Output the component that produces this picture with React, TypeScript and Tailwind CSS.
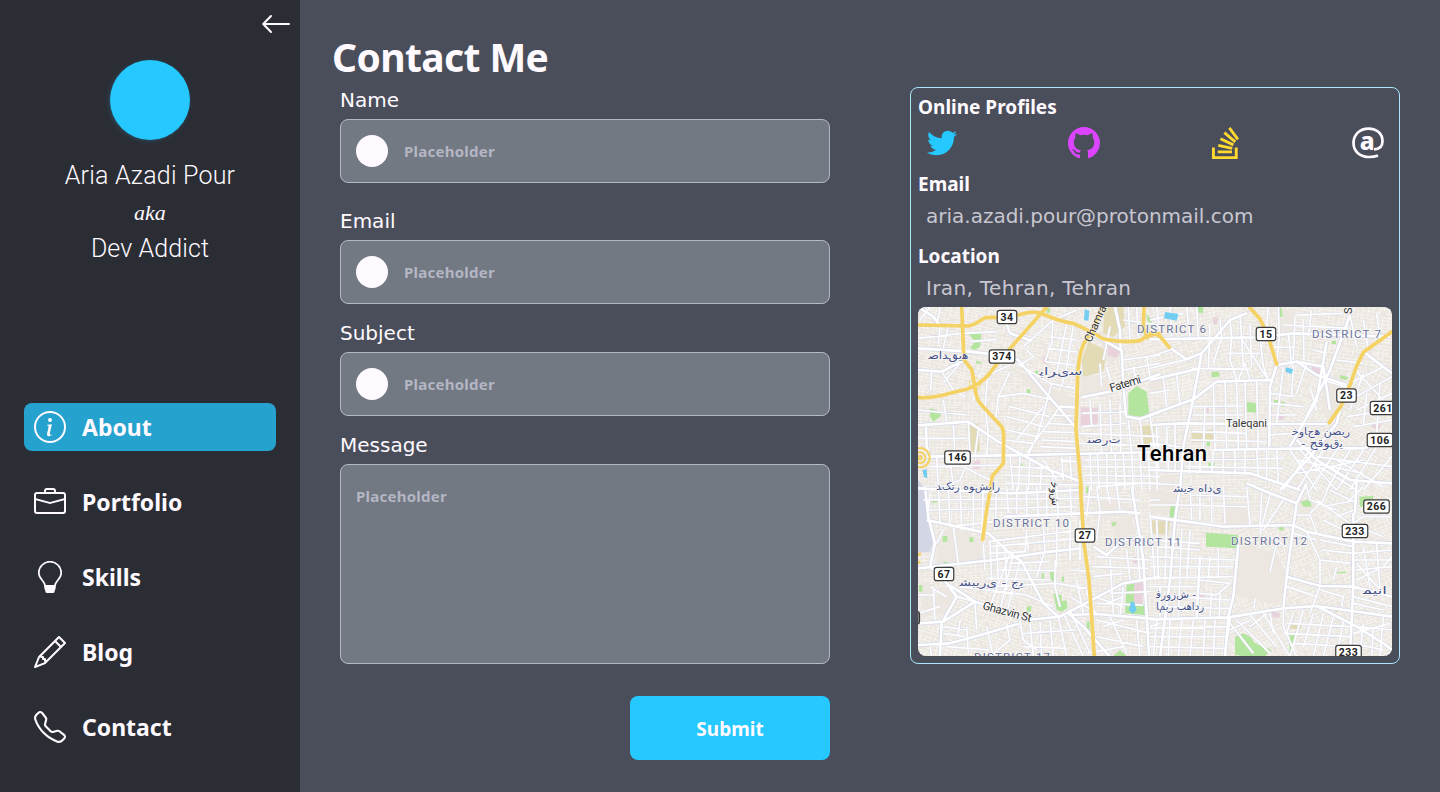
import React from "react";
import { BsInfoCircle, BsBriefcase, BsPencil, BsTelephone, BsGithub, BsStackOverflow } from "react-icons/bs";
import { FaTwitter } from "react-icons/fa";

function ArrowLeft() {
  return (
    <svg className="h-8 w-8" viewBox="0 0 32 32" fill="none" stroke="currentColor" strokeWidth="2" strokeLinecap="round" strokeLinejoin="round">
      <path d="M29 16H3.500M11 8L3.200 16l7.800 8" />
    </svg>
  );
}

function Bulb() {
  return (
    <svg className="h-8 w-8" viewBox="0 0 32 32" fill="none">
      <path d="M11 24.200C10 19.500 4.800 17.500 4.800 11.900a11.200 11.200 0 0 1 22.400 0c0 5.600-5.200 7.600-6.200 12.300" stroke="currentColor" strokeWidth="1.700" />
      <path d="M10 24h12l-.4 3.600q-.1 1-.7 1.400l-.4 2q-.4 1-1.400 1h-6.200q-1 0-1.400-1l-.4-2q-.6-.4-.7-1.400z" fill="currentColor" />
    </svg>
  );
}

function AtSign() {
  return (
    <svg className="h-8 w-8" viewBox="0 0 32 32">
      <path d="M26 28.400C23.400 29.500 20.600 30 17.300 30 8 30 1.500 24.500 1.500 16 1.500 7.500 8 1.600 16.500 1.600c8.200 0 14 5.100 14 12.700 0 5.600-3 8.100-8.500 8.100" fill="none" stroke="currentColor" strokeWidth="2.700" />
      <text x="7.800" y="23.400" fontSize="24.500" fontWeight="800" fontFamily="'Noto Sans', sans-serif" fill="currentColor">a</text>
    </svg>
  );
}

const nav = [
  { label: "About", icon: <BsInfoCircle size={32} />, active: true },
  { label: "Portfolio", icon: <BsBriefcase size={32} /> },
  { label: "Skills", icon: <Bulb /> },
  { label: "Blog", icon: <BsPencil size={32} /> },
  { label: "Contact", icon: <BsTelephone size={32} /> },
];

function Sidebar() {
  return (
    <aside className="flex w-[300px] shrink-0 flex-col bg-[#2b2d35]">
      <div className="flex h-[60px] justify-end pt-2 pr-2">
        <div className="h-8"><ArrowLeft /></div>
      </div>
      <div className="flex h-[343px] flex-col items-center font-['Roboto',sans-serif] font-light">
        <div className="h-20 w-20 rounded-full bg-[#25c8ff] shadow-[-1px_1px_4px_rgba(37,200,255,0.2)]" />
        <div className="mt-[17px] h-[37px] text-[25px] leading-[37px] tracking-[0.2px]">Aria Azadi Pour</div>
        <div className="h-[36px] font-['Liberation_Serif',serif] text-[22px] leading-[38px] font-normal italic">aka</div>
        <div className="h-[37px] text-[25px] leading-[37px] tracking-[0.1px]">Dev Addict</div>
      </div>
      <nav className="flex flex-col gap-[27px] px-6">
        {nav.map((n) => (
          <a key={n.label} className={n.active ? "flex h-12 items-center gap-4 rounded-lg bg-[#25a2ce] pl-[10px]" : "flex h-12 items-center gap-4 rounded-lg pl-[10px]"}>
            {n.icon}
            <span className="text-[23px] leading-8 font-bold">{n.label}</span>
          </a>
        ))}
      </nav>
    </aside>
  );
}

function Field({ label, gap }: { label: string; gap: string }) {
  return (
    <label className={"flex flex-col " + gap}>
      <span className="h-10 font-['DejaVu_Sans',sans-serif] text-[20px] leading-[42px]">{label}</span>
      <span className="flex h-16 items-center gap-4 rounded-lg border border-[#b5b7c3] bg-[#727983] px-[15px]">
        <span className="h-8 w-8 rounded-full bg-[#fffaff]" />
        <span className="text-[15px] leading-6 font-bold tracking-[0.25px] text-[#b5b5c3]">Placeholder</span>
      </span>
    </label>
  );
}

/* ---------- map ---------- */

type Tile = { x: number; y: number; major: string; minor: string; yellow: string };

const tiles: Tile[] = [
  {
    x: 0, y: 0,
    major:
      "M24 145L180 155 290 168 325 180 400 270 497 382M50 470L350 465 750 456M530 92L635 152 640 250 648 350M24 376L175 365 265 425 420 510 514 545M515 292L600 275 750 222M648 350L690 357 750 335M450 320L500 322M24 210L95 215 158 183M285 60L300 100 365 122M24 21L70 50 90 76M615 21L630 90 632 150M48 380L50 440 60 470",
    minor:
      "M60 21L30 60M90 21L80 76M90 76L85 130M115 76L100 145M24 115L155 100 262 95M180 125L262 118M340 140L430 60 500 30M350 150L370 170 330 195M430 45L425 130 405 185M470 70L440 220M490 80L470 200 455 260M405 185L495 195M420 110L500 120M410 145L500 155M210 220L190 300M232 240L225 320 235 400M265 290L255 370M235 225L300 195M300 215L265 290 340 280 430 300M320 190L370 220 420 250 495 265M425 250L385 400 355 465M400 320L320 420M300 320L420 350M290 350L400 380M290 390L380 410M285 420L370 430M430 345L490 348M415 370L495 375M400 395L500 398M395 420L505 425M390 440L505 445M450 320L350 460M24 330L170 345M100 300L110 365M65 210L62 270M95 215L130 270 165 290M100 250L150 190M235 400L230 470M130 375L135 465M175 365L180 470M205 390L195 465M24 415L170 415M60 500L280 495M80 470L85 570M120 470L130 570M180 470L150 540 100 560M160 500L240 540M300 470L310 570M330 470L325 570M360 480L355 570M395 495L390 570M430 515L425 570M300 500L420 505M285 525L460 530M285 550L510 555M450 480L500 485M455 470L460 540M480 470L485 540M400 480L440 540M505 400L750 410M505 430L750 438M515 380L650 370M540 300L545 380M570 310L575 460M600 300L605 460M630 310L632 460M655 360L665 460M690 357L700 456M720 345L735 456M515 340L650 335M520 480L750 478M520 500L750 502M520 525L750 530M520 548L750 550M540 460L545 570M562 460L568 570M590 460L592 570M615 460L620 570M640 460L645 570M665 460L670 570M690 460L696 570M715 460L720 570M738 460L742 570M600 80L580 180M590 200L610 270 640 250M570 190L575 260M640 180L750 165M640 210L750 190M670 200L680 250M710 170L720 230M640 60L750 75M655 21L660 120M680 21L685 110",
    yellow:
      "M24 75L175 78Q190 76 225 53L262 52M322 46Q375 28 405 45 455 66 490 70 545 95 580 117 640 130 690 122 715 103 750 101M155 21L162 180 185 208 195 262Q198 300 215 315L275 380Q282 390 281 420L280 490 247 528 240 570M24 292Q60 297 120 280L170 268Q215 250 235 225L270 180 410 21M578 21L550 85 522 130Q506 160 503 230L498 390 514 570M702 21L700 85 712 112",
  },
  {
    x: 720, y: 0,
    major:
      "M0 118L320 112 430 100 720 110M58 142L110 178 155 160 240 60 290 40M155 160L130 295 100 440 90 570M0 345L130 298 200 245 362 240M380 195L360 260 358 440M190 450L470 445 640 445 726 420M0 375L100 370 350 372 530 372M380 195L440 185 500 225 590 255M530 125L500 300 420 440M440 185L520 200 540 330M600 45L540 210 470 350M640 155L726 220M570 330L560 370 480 470 390 570M440 420L500 480 600 540 726 550M0 240L150 205M0 510L300 520 450 570",
    minor:
      "M110 21L120 110M140 21L145 112M180 75L175 205M210 60L215 112 190 190M240 60L245 112M245 112L240 180 260 240M270 40L280 200M300 70L305 200M330 112L340 200 355 240M355 21L350 80M385 21L388 110 380 190M415 100L425 195M435 50L430 180 M460 60L462 180M485 30L475 110M435 45L580 40M400 75L600 85M360 140L430 142M230 160L330 160M180 205L300 208 M125 205L240 208M0 170L60 150M0 205L110 178M0 280L60 270M40 235L50 320M80 225L90 310M130 320L280 318M130 345L280 345M125 395L290 400M120 420L350 425M165 320L160 450M190 250L195 450M225 240L230 450M260 240L265 450M285 240L290 450M320 240L325 450M285 190L265 240M285 190L300 240M355 240L270 110M360 280L430 290M360 310L460 320M358 345L440 345M358 405L430 400M400 200L380 370M430 195L425 290M470 190L440 280 M480 260L500 330M520 240L600 265M600 45L620 140M640 60L655 150M680 40L690 115M560 180L640 190M600 250L700 200M620 215L700 300M600 300L726 230M620 330L726 280M590 350L726 330M610 380L726 360M650 280L640 380M690 250L680 400M0 430L90 440M0 480L100 485M0 550L90 555M20 380L25 500M50 380L55 510M75 370L75 510M120 450L118 520M150 450L150 520M190 450L185 520M220 450L220 520M255 450L255 520M285 450L285 520M320 450L325 530M350 450L350 540M380 450L385 550M110 480L400 475M110 500L400 505M420 450L500 570M450 450L560 570M480 450L400 570M520 450L440 570M560 450L480 570M600 450L530 570M640 450L560 570M680 440L600 570M726 470L640 570M440 480L640 520M500 470L726 500M440 520L640 480M490 490L620 570M560 480L700 560M0 60L100 40M20 21L30 100M60 21L65 110M490 150L530 160M640 220L600 330",
    yellow:
      "M0 101Q22 100 33 113L58 142M298 21L330 57 353 105 370 160 380 193M726 95L640 157 620 198 600 255 572 320 538 368",
  },
  {
    x: 0, y: 540,
    major:
      "M45 20L55 110 75 190 60 260 110 310 140 350 95 430 90 530M50 120L235 160 300 220 335 245 400 370 445 410M24 265L250 240 420 215 510 205M110 310L195 365 350 420 450 410 640 310 750 290M24 430L100 425 195 365M24 495L120 490 230 460 330 430M475 405L560 402 750 418M475 400L520 440 600 530M280 110L640 95 690 100M550 200L590 225 640 180 700 170M665 20L700 240 718 540M24 25L300 40 510 30",
    minor:
      "M60 40L55 90M85 20L90 130M115 20L120 140M150 20L155 150M190 20L190 150M220 20L215 160M260 20L255 150M290 20L295 100M320 20L320 100M350 20L350 110M380 20L385 110M410 20L410 110M440 20L445 110M480 20L485 110M40 60L510 55M55 90L500 80M120 140L250 125M130 140L145 250M100 150L80 190M220 190L225 270M240 185L245 300M260 190L265 300M285 200L290 330M310 220L270 390M330 240L290 400M300 220L240 380M350 180L355 210M235 185L510 150M240 200L510 175M235 220L350 215M350 150L345 215M400 140L405 210 380 290M440 120L440 260M480 120L480 240M510 120L510 240M300 250L420 245M260 270L440 272M230 295L420 300M250 320L440 310 530 325M435 240L435 320 450 380M480 270L550 275M150 320L350 345 430 380M140 350L250 380M60 320L110 350M70 320L75 420M24 345L70 345M24 400L90 380M150 420L145 470M195 370L200 450M170 440L175 520M100 440L170 450M100 460L165 470M230 440L250 530M290 430L300 480 240 530M330 420L340 480 380 510M360 430L370 530M390 425L395 530M420 420L430 530M445 410L470 530M460 400L520 530M480 390L540 520M340 460L500 450M340 500L470 505M110 500L240 510M60 500L65 530M555 350L640 380M560 370L700 375M545 400L530 330M500 300L520 400M480 350L560 400M560 420L720 460M580 440L640 420M560 470L700 500M600 410L650 520M640 320L630 410M530 110L540 20M560 20L570 90M590 20L600 70M620 20L630 90M520 50L690 60M570 90L560 180M560 230L720 240M545 260L715 265M550 290L640 280M600 230L610 400M650 210L660 300M680 170L690 300M720 100L735 300M600 340L720 335M590 370L640 350M720 60L750 60M560 20L690 10M530 520L640 500M680 420L690 530M720 440L750 430",
    yellow: "M243 18L230 90 218 178M511 20L522 190 537 300 553 530",
  },
  {
    x: 720, y: 540,
    major:
      "M0 110L220 140 430 135 470 155 610 185 726 190M290 10L360 40 440 70 430 140 410 290 400 385M265 195L250 350 235 410 225 530M0 418L235 412 400 385 500 378 726 410M410 290L510 318 610 320 726 350M610 100L610 320 600 520M240 410L230 480M90 20L75 120 60 300 30 530M440 70L470 10M500 378L620 440 700 490 726 510M620 0L615 100M150 230L140 410",
    minor:
      "M120 20L125 120M150 20L150 120M185 20L185 130M220 20L225 130M290 20L300 135M0 75L80 75M85 75L290 80M120 45L290 50M335 40L330 140M360 45L330 160M400 60L340 150M440 105L480 105 500 160M480 100L520 60 540 10M500 60L600 130 700 170M520 80L620 60M540 30L600 60 640 20M560 110L610 90M580 150L640 110 720 110M470 20L480 60 560 90M520 120L600 160M470 155L510 240 510 320M510 180L610 200M515 210L610 220M510 240L600 250M430 160L500 180M410 320L500 350M510 320L480 400M510 330L580 350 575 380M560 260L550 300M610 220L726 210M615 240L726 240M620 270L726 260M620 300L700 260 726 230M620 250L700 340M640 200L660 320M680 190L690 330M610 350L726 380M610 370L700 390M380 190L360 275M410 200L360 170M0 180L150 190M20 200L150 210M0 230L260 240M0 260L250 260M0 295L250 290M0 320L150 320M20 120L25 300M50 120L45 300M95 150L85 410M120 150L110 300M180 230L175 300M205 205L205 290M150 300L240 310M150 340L200 345 240 310M60 350L240 360M30 380L240 385M30 320L30 410M185 340L180 410M210 340L208 410M0 445L230 440M0 470L225 470M0 500L225 505M20 420L10 530M60 420L55 530M95 420L85 530M130 420L120 530M165 420L160 530M195 420L190 530M240 430L310 520M260 420L360 520M300 405L380 500M340 400L420 530M240 450L300 420M300 440L350 400M360 400L370 460M400 390L400 440 440 530M430 400L410 460M460 390L420 530M490 400L460 500M520 400L490 530M550 410L520 530M580 425L560 530M410 430L600 440M400 460L600 470M430 490L600 500M620 440L726 450M610 460L720 430M610 490L700 510M640 430L630 520M670 440L665 530M700 410L690 530M315 355L312 385",
    yellow: "",
  },
];

function rng(seed: number) {
  let s = seed;
  return () => {
    s = (s * 16807) % 2147483647;
    return s / 2147483647;
  };
}

/* Short lanes in two crossing directions, filling a w × h rectangle. */
function lanes(seed: number, w: number, h: number, step: number) {
  const r = rng(seed);
  let d = "";
  for (let y = -h; y < h; y += step * (0.7 + r() * 0.6)) {
    let x = -w + r() * 30;
    while (x < w) {
      const len = 20 + r() * 60;
      d += `M${x.toFixed(0)} ${y.toFixed(0)}h${len.toFixed(0)}`;
      x += len + 3 + r() * 16;
    }
  }
  for (let x = -w; x < w; x += step * 1.5 * (0.7 + r() * 0.6)) {
    let y = -h + r() * 20;
    while (y < h) {
      const len = 10 + r() * 34;
      d += `M${x.toFixed(0)} ${y.toFixed(0)}v${len.toFixed(0)}`;
      y += len + 4 + r() * 20;
    }
  }
  return d;
}

const areas = [
  { p: "0,0 500,0 500,300 300,200 0,330", a: 12 },
  { p: "0,330 300,200 500,400 500,700 0,640", a: 2 },
  { p: "500,300 840,240 1080,250 1080,640 500,640", a: -2 },
  { p: "500,0 900,0 1080,250 500,300", a: -16 },
  { p: "900,0 1500,0 1500,200 1080,250", a: 8 },
  { p: "1080,250 1500,200 1500,660 1080,640", a: 28 },
  { p: "0,640 540,640 540,870 0,870", a: -4 },
  { p: "0,870 540,870 540,1110 0,1110", a: 18 },
  { p: "540,640 960,640 960,1110 540,1110", a: 3 },
  { p: "960,640 1500,640 1500,1110 960,1110", a: -22 },
];
const areaLanes = areas.map((_, i) => lanes(37 + i * 91, 560, 460, 10));

const open = [
  "24,20 50,20 24,60", "510,220 590,235 590,290 515,290", "560,100 600,80 635,160 600,200", "720,230 760,215 765,270 722,285",
  "515,200 530,250 515,300", "1110,30 1150,30 1150,90 1108,95", "1240,240 1310,210 1300,300 1260,370 1235,330",
  "80,700 130,680 215,720 215,790 85,800", "560,600 640,610 690,635 560,660", "30,845 60,850 90,920 40,960",
  "945,610 1010,610 1015,675 945,675", "1000,730 1100,760 1130,830 1110,915 985,890 970,840", "1160,600 1220,600 1215,640 1170,650",
  "600,660 660,650 680,700 620,720", "720,560 800,580 790,640 720,640", "720,520 800,530 790,570 720,560", "90,860 130,880 120,940 70,950",
];
const sand = [
  "582,21 640,21 645,80 610,110 580,100", "535,125 590,150 580,215 520,230 515,180", "170,375 205,370 210,455 185,455", "685,378 735,375 725,445 700,440",
  "845,400 918,385 915,420 845,428", "720,660 780,663 775,705 720,700", "1140,970 1175,975 1170,990 1140,985", "1275,923 1285,923 1285,937 1275,937",
];
const pink = [
  "512,322 565,325 562,383 512,380", "595,135 630,155 620,175 592,165", "400,168 420,180 410,192 398,190", "1205,200 1250,210 1245,232 1205,225",
  "672,850 700,848 698,912 672,912", "190,485 210,480 212,505 192,508", "865,885 885,885 885,900 865,900", "1085,935 1110,938 1108,955 1085,950",
  "1385,365 1415,375 1405,390 1385,382", "670,770 690,770 690,790 670,790", "1105,340 1125,340 1120,360 1105,360", "910,50 925,55 920,75 910,70", "880,325 897,325 897,338 880,338",
];
const green = [
  "175,100 215,92 210,140 195,150 180,145 195,125", "655,280 680,258 710,275 718,340 690,350 655,345", "60,325 95,335 90,350 70,365 60,350", "860,21 880,21 880,38 860,38",
  "1007,305 1040,310 1040,338 1008,335", "905,215 928,215 928,230 905,232", "1105,21 1115,25 1118,50 1108,50", "888,698 985,705 980,745 888,740",
  "650,855 672,850 672,910 708,912 705,945 645,940", "430,880 455,885 455,935 440,930", "452,905 470,900 472,925 455,935", "782,618 800,615 797,655 778,650", "395,820 402,820 402,840 395,840", "420,815 432,815 432,845 422,840",
  "65,598 82,598 82,608 65,608", "98,708 112,708 112,725 98,725", "178,712 190,712 190,726 178,726", "975,1010 1000,1000 1020,1010 1035,1030 1085,1050 1060,1075 975,1065", "1140,1005 1158,1000 1150,1050 1138,1055",
  "1172,605 1200,598 1205,620 1180,620", "1348,590 1390,588 1390,620 1350,620", "610,1068 630,1050 650,1068", "1092,300 1105,300 1102,315 1092,315", "1113,305 1125,305 1122,320 1113,320", "890,422 900,422 900,438 890,438", "895,488 915,488 912,505 895,505",
  "100,785 112,785 112,800 100,800", "1282,815 1310,815 1308,820 1282,820", "1290,225 1315,232 1310,240 1290,236", "330,490 338,490 338,500 330,500", "405,755 438,755 438,760 405,760", "528,560 538,560 538,580 528,580", "350,920 365,918 362,935 350,935", "604,668 620,665 615,678 606,678", "455,830 462,830 462,845 455,845", "27,855 37,855 37,875 27,875", "198,182 212,185 212,192 198,190", "375,212 385,212 383,225 375,222", "350,268 362,268 360,280 350,278", "1265,122 1278,122 1278,132 1265,132", "708,40 725,60 730,85 715,75", "1107,680 1122,682 1120,692 1107,690", "410,25 420,25 420,38 410,38", "530,965 540,965 538,990 530,985",
];
const water = ["524,28 538,32 535,62 522,60", "765,36 805,42 800,62 762,55", "1127,202 1150,208 1145,222 1127,215", "662,905 672,905 680,930 668,942 656,930 660,920", "37,510 50,508 52,535 42,530"];

const shields: [number, number, string][] = [
  [1007, 317, "34"], [1002, 356.5, "374"], [957.5, 457.5, "146"], [1266, 334, "15"], [1346.5, 395.5, "23"], [1383, 408, "261"],
  [1380, 440, "106"], [1376.5, 506.5, "266"], [1355, 531, "233"], [1085, 535.5, "27"], [944, 574, "67"], [1348.5, 652, "233"],
];

const rtl: [number, number, string, number][] = [
  [948.5, 359, "صادقیه", 40], [1061, 375, "پاریس", 43], [1104, 443, "نصرت", 33], [968, 490, "دکتر هوشیار", 64], [991.5, 586, "شبیری - جی", 64],
  [1197.5, 492, "شیخ هادی", 48], [1321, 435, "خواجه نصیر", 58], [1322, 447, "- حقوقی", 42], [1176, 598, "فروزش -", 40], [1180, 610, "امیر بهادر", 48], [1375, 594, "مینا", 24],
];

/* Keeps each letter's contextual form while the letters run left to right. */
function spread(s: string) {
  const ZWJ = "\u200d";
  const ZWNJ = "\u200c";
  const letter = (c?: string) => !!c && c > "\u0600";
  const dual = (c?: string) => letter(c) && !"اآدذرزژو".includes(c as string);
  return s
    .split("")
    .map((c, i) => {
      if (!letter(c)) return c;
      const next = dual(c) && letter(s[i + 1]);
      const prev = dual(s[i - 1]);
      return (next ? ZWJ : "") + c + (prev ? ZWJ : "") + ZWNJ;
    })
    .join("");
}

const districts: [number, number, string, number][] = [
  [1137, 333, "DISTRICT 6", 69], [1312, 337.5, "DISTRICT 7", 69], [993, 526.5, "DISTRICT 10", 76], [1105, 546, "DISTRICT 11", 76], [1231, 544.5, "DISTRICT 12", 76], [974, 661, "DISTRICT 17", 76],
];

const halo = { paintOrder: "stroke" } as const;

function CityMap() {
  return (
    <svg className="h-[349px] w-[474px] rounded-lg" viewBox="918 307 474 349">
      <rect x="918" y="307" width="474" height="349" fill="#ece7e1" />
      <g transform="translate(910 300) scale(.33333)" fill="none">
        {areas.map((a, i) => (
          <clipPath key={i} id={"area" + i}><polygon points={a.p} /></clipPath>
        ))}
        {areas.map((a, i) => {
          const pts = a.p.split(" ").map((q) => q.split(",").map(Number));
          const cx = pts.reduce((s, q) => s + q[0], 0) / pts.length;
          const cy = pts.reduce((s, q) => s + q[1], 0) / pts.length;
          return (
            <g key={i} clipPath={`url(#area${i})`}>
              <path transform={`translate(${cx} ${cy}) rotate(${a.a})`} d={areaLanes[i]} stroke="#f8f6f2" strokeWidth="2.500" />
            </g>
          );
        })}
        {open.map((p) => <polygon key={p} points={p} fill="#ece7e1" />)}
        {sand.map((p) => <polygon key={p} points={p} fill="#e3dbb5" />)}
        {pink.map((p) => <polygon key={p} points={p} fill="#ead2dc" />)}
        {green.map((p) => <polygon key={p} points={p} fill="#b4e59f" />)}
        <polygon points="24,540 40,560 52,640 68,730 60,755 24,758" fill="#d3d6e4" />
        {tiles.map((t, i) => <path key={i} transform={`translate(${t.x} ${t.y})`} d={t.minor} stroke="#d9dcec" strokeWidth="8" />)}
        {tiles.map((t, i) => <path key={i} transform={`translate(${t.x} ${t.y})`} d={t.major} stroke="#d3d7ea" strokeWidth="12" strokeLinejoin="round" />)}
        {tiles.map((t, i) => <path key={i} transform={`translate(${t.x} ${t.y})`} d={t.minor} stroke="#fff" strokeWidth="5" />)}
        {tiles.map((t, i) => <path key={i} transform={`translate(${t.x} ${t.y})`} d={t.major} stroke="#fff" strokeWidth="8" strokeLinejoin="round" />)}
        {water.map((p) => <polygon key={p} points={p} fill="#72cdf1" />)}
        {tiles.map((t, i) => <path key={i} transform={`translate(${t.x} ${t.y})`} d={t.yellow} stroke="#f4d264" strokeWidth="11" strokeLinecap="round" strokeLinejoin="round" />)}
        <g stroke="#f4d264" strokeWidth="6">
          <circle cx="30" cy="473" r="29" />
          <circle cx="30" cy="473" r="16" />
          <circle cx="30" cy="473" r="5" />
          <path d="M24 763h9M24 787h7" strokeWidth="9" />
          <circle cx="195" cy="250" r="17" strokeWidth="2.500" />
        </g>
      </g>

      <g fontFamily="'Roboto', sans-serif" fill="#68729c" stroke="#fff" strokeWidth="1.500" strokeOpacity=".6" fontSize="11.500">
        {districts.map(([x, y, s, w]) => <text key={s} x={x} y={y} textLength={w} style={halo}>{s}</text>)}
      </g>
      <g fontFamily="'DejaVu Sans', sans-serif" fill="#45528a" stroke="#fff" strokeWidth="1.500" strokeOpacity=".7" fontSize="10.500" textAnchor="middle">
        {rtl.map(([x, y, s, w]) => (
          <text key={s} x={x} y={y} textLength={w} lengthAdjust="spacingAndGlyphs" className="[direction:ltr] [unicode-bidi:bidi-override]" style={halo}>{spread(s)}</text>
        ))}
      </g>
      <g fontFamily="'Roboto', sans-serif" fill="#333" stroke="#fff" strokeWidth="1.500" strokeOpacity=".7">
        <text transform="translate(1091 343) rotate(-66)" fontSize="11.500" textLength="45" style={halo}>Chamran</text>
        <text transform="translate(1111 392) rotate(-17)" fontSize="11.500" textLength="32" style={halo}>Fatemi</text>
        <text x="1226" y="427" fontSize="11" textLength="41" style={halo}>Taleqani</text>
        <text transform="translate(982 609) rotate(15)" fontSize="11.500" textLength="50" style={halo}>Ghazvin St</text>
        <text transform="translate(1352 314) rotate(-90)" fontSize="11" style={halo}>S</text>
        <text transform="translate(1051 482) rotate(88)" fontSize="11" fontFamily="'DejaVu Sans', sans-serif" textLength="24" lengthAdjust="spacingAndGlyphs" className="[direction:ltr] [unicode-bidi:bidi-override]" style={halo}>{spread("خوش")}</text>
      </g>
      {shields.map(([x, y, s]) => {
        const w = s.length === 3 ? 25.5 : 19.5;
        return (
          <g key={s + y}>
            <rect x={x - w / 2} y={y - 6.7} width={w} height="13.400" rx="2.500" fill="#fff" stroke="#3a3a3a" strokeWidth="1.200" />
            <text x={x} y={y + 3.8} textAnchor="middle" fontSize="10.500" fontWeight="700" fontFamily="'Roboto', sans-serif" fill="#222" letterSpacing=".4">{s}</text>
          </g>
        );
      })}
      <rect x="908" y="611.500" width="11.500" height="12.500" rx="2.500" fill="#888" stroke="#3a3a3a" strokeWidth="1.200" />
      <text x="1137" y="461" fontSize="22" fontWeight="500" fontFamily="'Roboto', sans-serif" fill="#000" stroke="#fff" strokeWidth="2" strokeOpacity=".7" textLength="70" style={halo}>Tehran</text>
    </svg>
  );
}

function Profiles() {
  return (
    <section className="flex h-[577px] w-[490px] flex-col rounded-lg border border-[#a8e6fb] px-[7px]">
      <h2 className="h-[39px] text-[19px] leading-[39px] font-bold">Online Profiles</h2>
      <div className="flex h-8 items-center justify-between px-2">
        <span className="flex h-8 w-8 items-center justify-center text-[#25c8ff]"><FaTwitter size={30} /></span>
        <span className="flex h-8 w-8 items-center text-[#dd44ff]"><BsGithub size={32} /></span>
        <span className="flex h-8 w-8 items-center text-[#ffd92e]"><BsStackOverflow size={32} /></span>
        <AtSign />
      </div>
      <h2 className="mt-1 h-10 pt-1 text-[19px] leading-[34px] font-bold">Email</h2>
      <p className="h-8 px-2 font-['DejaVu_Sans',sans-serif] text-[20px] leading-[26px] text-[#c9c7d1]">aria.azadi.pour@protonmail.com</p>
      <h2 className="h-10 pt-1 text-[19px] leading-[34px] font-bold">Location</h2>
      <p className="h-8 px-2 font-['DejaVu_Sans',sans-serif] text-[20px] leading-[26px] tracking-[0.35px] text-[#c9c7d1]">Iran, Tehran, Tehran</p>
      <CityMap />
    </section>
  );
}

export default function App() {
  return (
    <div className="flex h-[792px] w-[1440px] overflow-hidden bg-[#4a4e5a] font-['Noto_Sans',sans-serif] text-[#fffaff]">
      <Sidebar />
      <main className="flex grow flex-col pt-[31px] pl-8">
        <h1 className="h-12 text-[39px] leading-[51px] font-bold tracking-[-0.6px]">Contact Me</h1>
        <div className="flex gap-20 pl-2">
          <form className="flex w-[490px] flex-col">
            <Field label="Name" gap="mb-[17px]" />
            <Field label="Email" gap="mb-2" />
            <Field label="Subject" gap="mb-2" />
            <label className="flex flex-col">
              <span className="h-10 font-['DejaVu_Sans',sans-serif] text-[20px] leading-[42px]">Message</span>
              <span className="h-[200px] rounded-lg border border-[#b5b7c3] bg-[#727983] px-[15px] pt-[19px] text-[15px] leading-6 font-bold tracking-[0.25px] text-[#b5b5c3]">Placeholder</span>
            </label>
            <button type="button" className="mt-8 h-16 w-[200px] self-end rounded-lg bg-[#25c8ff] pt-0.5 text-[19px] font-bold">Submit</button>
          </form>
          <div className="pt-2"><Profiles /></div>
        </div>
      </main>
    </div>
  );
}
